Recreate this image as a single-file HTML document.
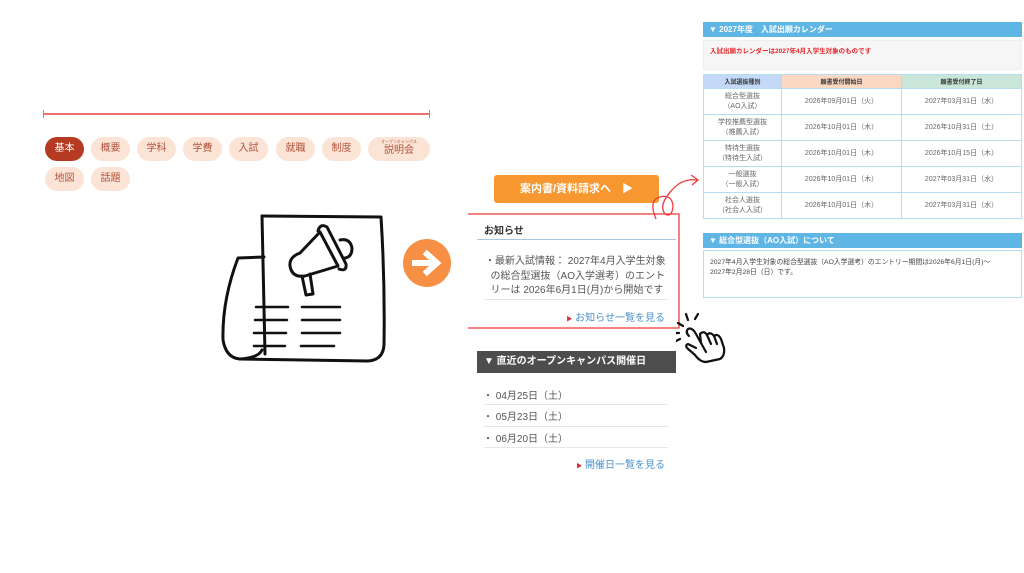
<!DOCTYPE html>
<html><head><meta charset="utf-8"><style>
*{margin:0;padding:0;box-sizing:border-box}
body{width:1024px;height:573px;background:#fff;position:relative;overflow:hidden;font-family:"Liberation Sans","Noto Sans CJK JP",sans-serif;color:#555}
.a{position:absolute}
.pill{position:absolute;height:24px;width:39px;border-radius:12px;background:#fbe3d6;color:#b0543c;font-size:10px;text-align:center;line-height:24px}
.bh{position:absolute;background:#5fb6e4;color:#fff;font-weight:bold;font-size:8px;line-height:15px;padding-left:6px}
table{border-collapse:collapse;font-size:7px;color:#666;text-align:center}
td{border:1px solid #b6dcf2;height:26px;line-height:10px}
th{border:1px solid #b6dcf2;height:14px;font-size:6px;color:#333}
.li{position:absolute;left:483px;font-size:10px;color:#555}
.sep{position:absolute;left:484px;width:184px;height:1px;background:#e6e6e6}
</style></head><body>
<div class="a" style="left:43px;top:113px;width:387px;height:2px;background:#f07070"></div>
<div class="a" style="left:43px;top:110px;width:1px;height:8px;background:#f07070"></div>
<div class="a" style="left:429px;top:110px;width:1px;height:8px;background:#f07070"></div>
<div class="pill" style="left:45px;top:137px;background:#b53a22;color:#fff">基本</div>
<div class="pill" style="left:91px;top:137px">概要</div>
<div class="pill" style="left:137px;top:137px">学科</div>
<div class="pill" style="left:183px;top:137px">学費</div>
<div class="pill" style="left:229px;top:137px">入試</div>
<div class="pill" style="left:276px;top:137px">就職</div>
<div class="pill" style="left:322px;top:137px">制度</div>
<div class="pill" style="left:368px;top:137px;width:62px;line-height:normal;padding-top:2px"><div style="font-size:5px;line-height:6px;transform:scale(0.8)">オープンキャンパス</div><div style="font-size:10px;line-height:12px">説明会</div></div>
<div class="pill" style="left:45px;top:167px">地図</div>
<div class="pill" style="left:91px;top:167px">話題</div>

<svg class="a" style="left:215px;top:205px" width="180" height="165" viewBox="215 205 180 165" fill="none" stroke="#111" stroke-width="3" stroke-linecap="round" stroke-linejoin="round">
<path d="M262 216 L381 217 Q385 280 384 345 Q383 360 368 361 L240 359"/>
<path d="M262 216 L265 354"/>
<path d="M264 257 L238 258 Q222 300 223 340 Q226 358 240 359 Q258 358 262 350"/>
<path d="M300 253 L320 232 L338 266 L305 276 Q292 278 290 266 Q289 257 300 253 Z"/>
<path d="M318 231 Q320 223 327 227 L346 264 Q347 272 339 269"/>
<path d="M340 240 Q350 238 352 248 Q352 257 345 258"/>
<path d="M302 276 L306 295 L313 294 L310 274"/>
<g stroke-width="2.5"><path d="M256 307h32M302 307h38M255 320h32M302 320h38M254 333h32M302 333h38M254 346h31M301 346h33"/></g>
</svg>
<div class="a" style="left:403px;top:239px;width:48px;height:48px;border-radius:50%;background:#f79045"></div>
<svg class="a" style="left:403px;top:239px" width="48" height="48"><path d="M12 24h20M24 15l10 9-10 9" stroke="#fff" stroke-width="6" fill="none" stroke-linecap="square"/></svg>

<div class="a" style="left:494px;top:175px;width:165px;height:28px;background:#f79730;border-radius:3px;color:#fff;font-weight:bold;font-size:11px;line-height:28px;text-align:center">案内書/資料請求へ　▶</div>

<div class="a" style="left:484px;top:222px;font-size:10px;font-weight:bold;color:#333">お知らせ</div>
<div class="a" style="left:477px;top:239px;width:199px;height:1px;background:#a9c6e4"></div>
<div class="a" style="left:485px;top:255px;width:200px;font-size:10px;line-height:14.5px;color:#555;white-space:nowrap">・最新入試情報： 2027年4月入学生対象<br>&nbsp;&nbsp;の総合型選抜（AO入学選考）のエント<br>&nbsp;&nbsp;リーは 2026年6月1日(月)から開始です</div>
<div class="sep" style="top:299px"></div>
<div class="a" style="left:560px;top:309px;width:105px;text-align:right;font-size:10px;color:#4a8fc8"><span style="color:#e03030;font-size:6px">▶</span> お知らせ一覧を見る</div>

<div class="a" style="left:477px;top:351px;width:199px;height:22px;background:#4d4d4d;color:#fff;font-weight:bold;font-size:10px;line-height:22px;padding-left:7px">▼ 直近のオープンキャンパス開催日</div>
<div class="li" style="top:387px">・ 04月25日（土）</div><div class="sep" style="top:404px"></div>
<div class="li" style="top:408px">・ 05月23日（土）</div><div class="sep" style="top:426px"></div>
<div class="li" style="top:430px">・ 06月20日（土）</div><div class="sep" style="top:447px"></div>
<div class="a" style="left:560px;top:456px;width:105px;text-align:right;font-size:10px;color:#4a8fc8"><span style="color:#e03030;font-size:6px">▶</span> 開催日一覧を見る</div>

<svg class="a" style="left:0;top:0" width="1024" height="573" fill="none" stroke="#ee3b3b" stroke-width="1.3">
<path d="M468 214H679V328H468"/>
<path d="M656 219 Q648 200 660 197 Q672 194 673 206 Q672 218 665 214 Q658 205 672 190 Q682 178 698 180"/>
<path d="M691 175l7 5-6 5"/>
</svg>
<svg class="a" style="left:676px;top:310px" width="54" height="55" fill="none" stroke="#111" stroke-width="2.2" stroke-linecap="round" stroke-linejoin="round">
<path d="M13 26 Q9 22 12 19 Q16 17 20 24 L25 33 L24 24 Q28 20 31 25 Q34 21 38 26 Q42 23 45 29 L48 38 Q49 46 44 49 L30 52 Q24 52 19 45 L11 38 Q9 35 12 34 L20 38"/>
<path d="M25 33 L30 42M31 25 L35 34M38 26 L41 34"/>
<path d="M7 16l-5-3M12 10l-2-6M19 9l3-5M3 23h-4M4 29l-4 2"/>
</svg>

<div class="bh" style="left:703px;top:22px;width:319px">▼ 2027年度　入試出願カレンダー</div>
<div class="a" style="left:703px;top:40px;width:319px;height:30px;background:#f6f6f6;border:1px solid #eee;color:#e8262a;font-size:6.5px;font-weight:bold;padding:4px 6px">入試出願カレンダーは2027年4月入学生対象のものです</div>
<table class="a" style="left:703px;top:74px;width:319px">
<tr><th style="width:78px;background:#c4d9f8">入試選抜種別</th><th style="width:120px;background:#fcd8c3">願書受付開始日</th><th style="background:#cae6d9">願書受付終了日</th></tr>
<tr><td>総合型選抜<br>（AO入試）</td><td>2026年09月01日（火）</td><td>2027年03月31日（水）</td></tr>
<tr><td>学校推薦型選抜<br>（推薦入試）</td><td>2026年10月01日（木）</td><td>2026年10月31日（土）</td></tr>
<tr><td>特待生選抜<br>（特待生入試）</td><td>2026年10月01日（木）</td><td>2026年10月15日（木）</td></tr>
<tr><td>一般選抜<br>（一般入試）</td><td>2026年10月01日（木）</td><td>2027年03月31日（水）</td></tr>
<tr><td>社会人選抜<br>（社会人入試）</td><td>2026年10月01日（木）</td><td>2027年03月31日（水）</td></tr>
</table>
<div class="bh" style="left:703px;top:233px;width:319px">▼ 総合型選抜（AO入試）について</div>
<div class="a" style="left:703px;top:250px;width:319px;height:48px;border:1px solid #b6dcf2;font-size:6.8px;color:#444;line-height:10px;padding:7px 6px;white-space:nowrap">2027年4月入学生対象の総合型選抜（AO入学選考）のエントリー期間は2026年6月1日(月)～<br>2027年2月28日（日）です。</div>
</body></html>
